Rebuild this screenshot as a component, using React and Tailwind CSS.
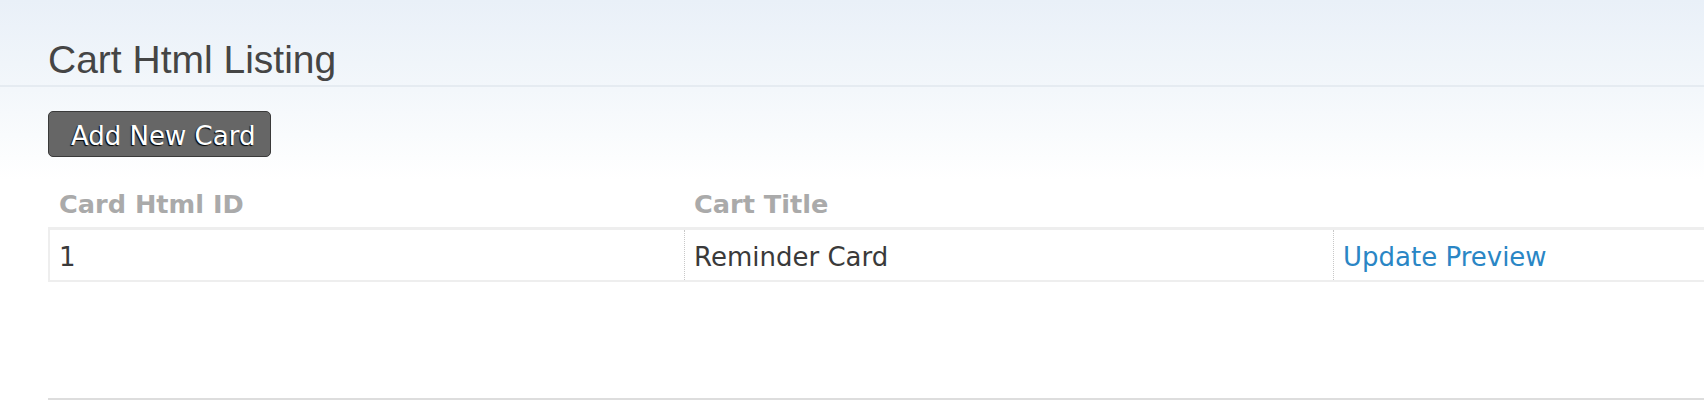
import React from "react";

export default function App() {
  return (
    <div className="w-[1704px] h-[400px] overflow-hidden bg-white">
      <div className="bg-gradient-to-b from-[#e9f0f8] via-[#f3f7fb] via-50% to-white h-[180px] -mb-[180px]" />
      <div className="relative">
        <div className="pt-[38px] pl-[48px] pb-[3px]">
          <h1 className="font-['Liberation_Sans',Arial,sans-serif] text-[39px] leading-[44px] text-[#454545] font-normal">
            Cart Html Listing
          </h1>
        </div>
        <div className="h-[2px] bg-[#e5ebf1]" />
        <div className="pl-[48px] pt-[24px]">
          <button className="w-[223px] h-[46px] rounded-[5px] border border-[#3a3a3a] bg-[#666666] text-left pl-[22px] pt-[4px] font-['DejaVu_Sans',Verdana,sans-serif] text-[26px] text-white [text-shadow:-1px_1px_1px_#000]">
            Add New Card
          </button>
        </div>
        <div className="pl-[48px] pt-[20px] font-['DejaVu_Sans',Verdana,sans-serif]">
          <div className="flex h-[50px] items-center pt-[4px] text-[25.6px] font-bold text-[#aaaaaa]">
            <div className="w-[636px] pl-[11px]">Card Html ID</div>
            <div className="w-[648px] pl-[10px]">Cart Title</div>
            <div className="flex-1" />
          </div>
          <div className="flex h-[55px] border-t-[3px] border-b-2 border-l-2 border-[#eeeeee] bg-white text-[26px] text-[#3a3a3a]">
            <div className="w-[634px] pl-[9px] flex items-center pt-[4px]">1</div>
            <div className="w-[649px] pl-[9px] flex items-center pt-[4px] border-l border-dotted border-[#c8c8c8]">
              Reminder Card
            </div>
            <div className="flex-1 pl-[9px] flex items-center pt-[4px] border-l border-dotted border-[#c8c8c8]">
              <a className="text-[#2a86c5] cursor-pointer">Update Preview</a>
            </div>
          </div>
          <div className="mt-[116px] h-[2px] bg-[#dddddd]" />
        </div>
      </div>
    </div>
  );
}
